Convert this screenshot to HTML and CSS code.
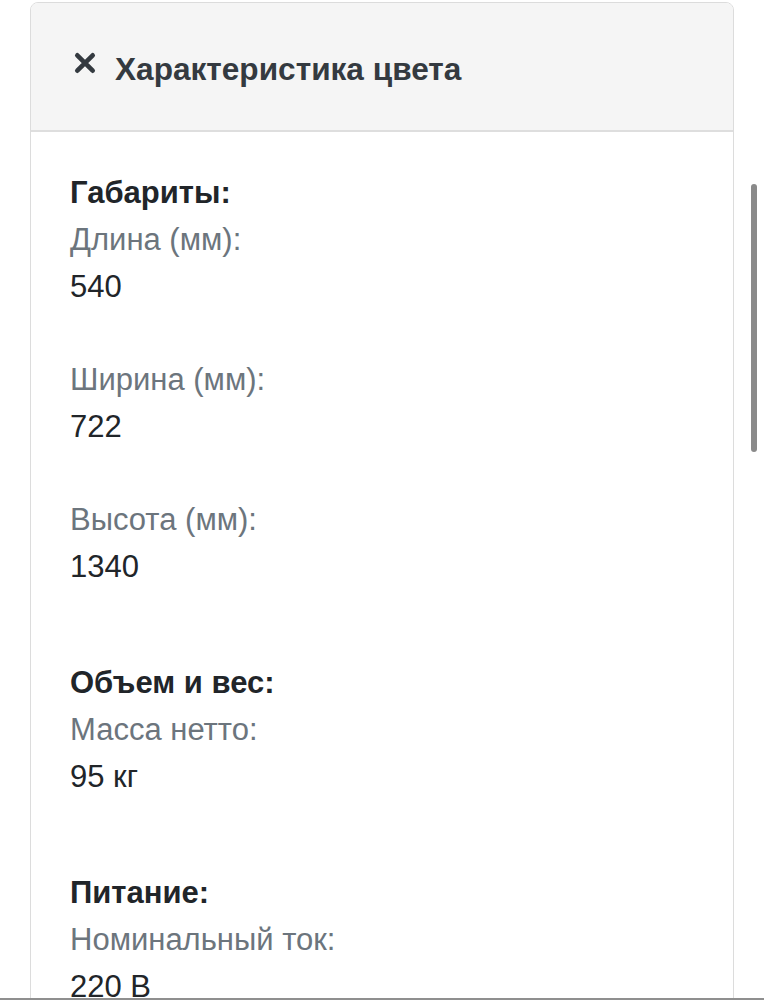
FILE: index.html
```html
<!DOCTYPE html>
<html>
  <head>
    <title>Характеристика цвета</title>
    <meta name="viewport" content="width=device-width, initial-scale=1.0" />
    <link rel="stylesheet" href="styles.css">
  </head>
  <body>
    <div class="card">
      <div class="card-header">
        <svg class="close" viewBox="0 0 20 20" width="22" height="22">
          <path d="M3 3 L17 17 M17 3 L3 17" stroke="#343a40" stroke-width="4.2" stroke-linecap="round" />
        </svg>
        <span class="title">Характеристика цвета</span>
      </div>
      <div class="card-body">
        <div class="group">
          <div class="group-title">Габариты:</div>
          <div class="item">
            <div class="label">Длина (мм):</div>
            <div class="value">540</div>
          </div>
          <div class="item">
            <div class="label">Ширина (мм):</div>
            <div class="value">722</div>
          </div>
          <div class="item">
            <div class="label">Высота (мм):</div>
            <div class="value">1340</div>
          </div>
        </div>
        <div class="group">
          <div class="group-title">Объем и вес:</div>
          <div class="item">
            <div class="label">Масса нетто:</div>
            <div class="value">95 кг</div>
          </div>
        </div>
        <div class="group">
          <div class="group-title">Питание:</div>
          <div class="item">
            <div class="label">Номинальный ток:</div>
            <div class="value">220 В</div>
          </div>
        </div>
      </div>
    </div>
    <div class="scroll-thumb"></div>
    <div class="bottom-edge"></div>
  </body>
</html>
```

FILE: styles.css
```css
html,
body {
  margin: 0;
  background: #fff;
  font-family: "Liberation Sans", Arial, sans-serif;
  overflow: hidden;
  height: 1000px;
}
.card {
  margin: 2px 0 0 30px;
  width: 704px;
  box-sizing: border-box;
  border: 1px solid #dcdcdc;
  border-radius: 8px 8px 0 0;
  height: 1100px;
}
.card-header {
  display: flex;
  align-items: center;
  gap: 19px;
  height: 127px;
  padding: 0 0 0 43px;
  background: #f5f5f5;
  border-bottom: 2px solid #dedede;
  border-radius: 7px 7px 0 0;
}
.close {
  margin-top: -8px;
}
.title {
  font-size: 31.6px;
  font-weight: bold;
  color: #343a40;
  margin-top: 6px;
}
.card-body {
  padding: 37px 39px;
  font-size: 31px;
  line-height: 47px;
}
.group {
  margin-bottom: 69px;
}
.group-title {
  font-weight: bold;
  color: #212529;
}
.item {
  margin-bottom: 46px;
}
.label {
  color: #6c757d;
}
.value {
  color: #212529;
}
.scroll-thumb {
  position: fixed;
  left: 751px;
  top: 184px;
  width: 6px;
  height: 268px;
  border-radius: 3px;
  background: #8a8a8a;
}
.bottom-edge {
  position: fixed;
  left: 0;
  right: 0;
  bottom: 0;
  height: 2px;
  background: #8f8f8f;
}
```
